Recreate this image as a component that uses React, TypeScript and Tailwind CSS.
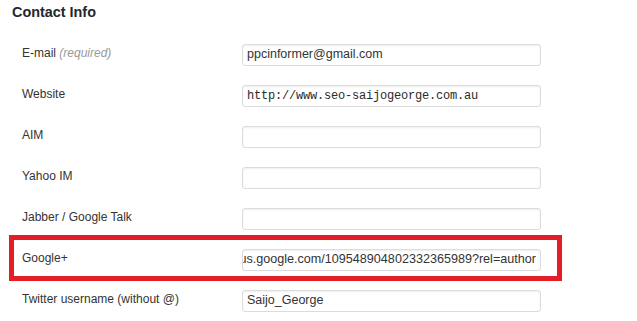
import type { ReactNode } from "react";

interface FieldRowProps {
  label: ReactNode;
  value?: string;
  mono?: boolean;
  alignEnd?: boolean;
  highlight?: boolean;
}

function FieldRow({ label, value, mono, alignEnd, highlight }: FieldRowProps) {
  return (
    <div className="relative h-[41px] flex items-center">
      {highlight && (
        <span className="absolute left-[9px] w-[553px] -top-[4px] h-[46px] border-[5px] border-[#e41e26] pointer-events-none" />
      )}
      <div className="w-[242px] shrink-0 pl-[22px] mb-[3px] text-[12px] text-[#333]">{label}</div>
      <div
        className={`w-[299px] shrink-0 h-[22px] border border-[#dcdcdc] rounded-[3px] bg-white shadow-[inset_0_1px_2px_rgba(0,0,0,0.07)] flex items-center overflow-hidden whitespace-nowrap px-[4px] ${
          alignEnd ? "justify-end text-[12.6px]" : "text-[12.5px]"
        } ${
          mono
            ? "font-['Liberation_Mono',monospace] !text-[12px] tracking-[-0.2px] text-[#2a2a2a]"
            : "text-[#333]"
        }`}
      >
        {value}
      </div>
    </div>
  );
}

export default function App() {
  return (
    <div className="w-[637px] h-[321px] bg-white overflow-hidden font-['Liberation_Sans',Arial,sans-serif]">
      <h2 className="pt-[4px] pl-[12px] text-[14.4px] leading-[17px] font-bold text-[#23282d] mb-[13px]">
        Contact Info
      </h2>
      <FieldRow
        label={
          <>
            E-mail <span className="italic text-[#999]">(required)</span>
          </>
        }
        value="ppcinformer@gmail.com"
      />
      <FieldRow label="Website" value="http://www.seo-saijogeorge.com.au" mono />
      <FieldRow label="AIM" />
      <FieldRow label="Yahoo IM" />
      <FieldRow label="Jabber / Google Talk" />
      <FieldRow
        label="Google+"
        value="https://plus.google.com/109548904802332365989?rel=author"
        alignEnd
        highlight
      />
      <FieldRow label="Twitter username (without @)" value="Saijo_George" />
    </div>
  );
}
